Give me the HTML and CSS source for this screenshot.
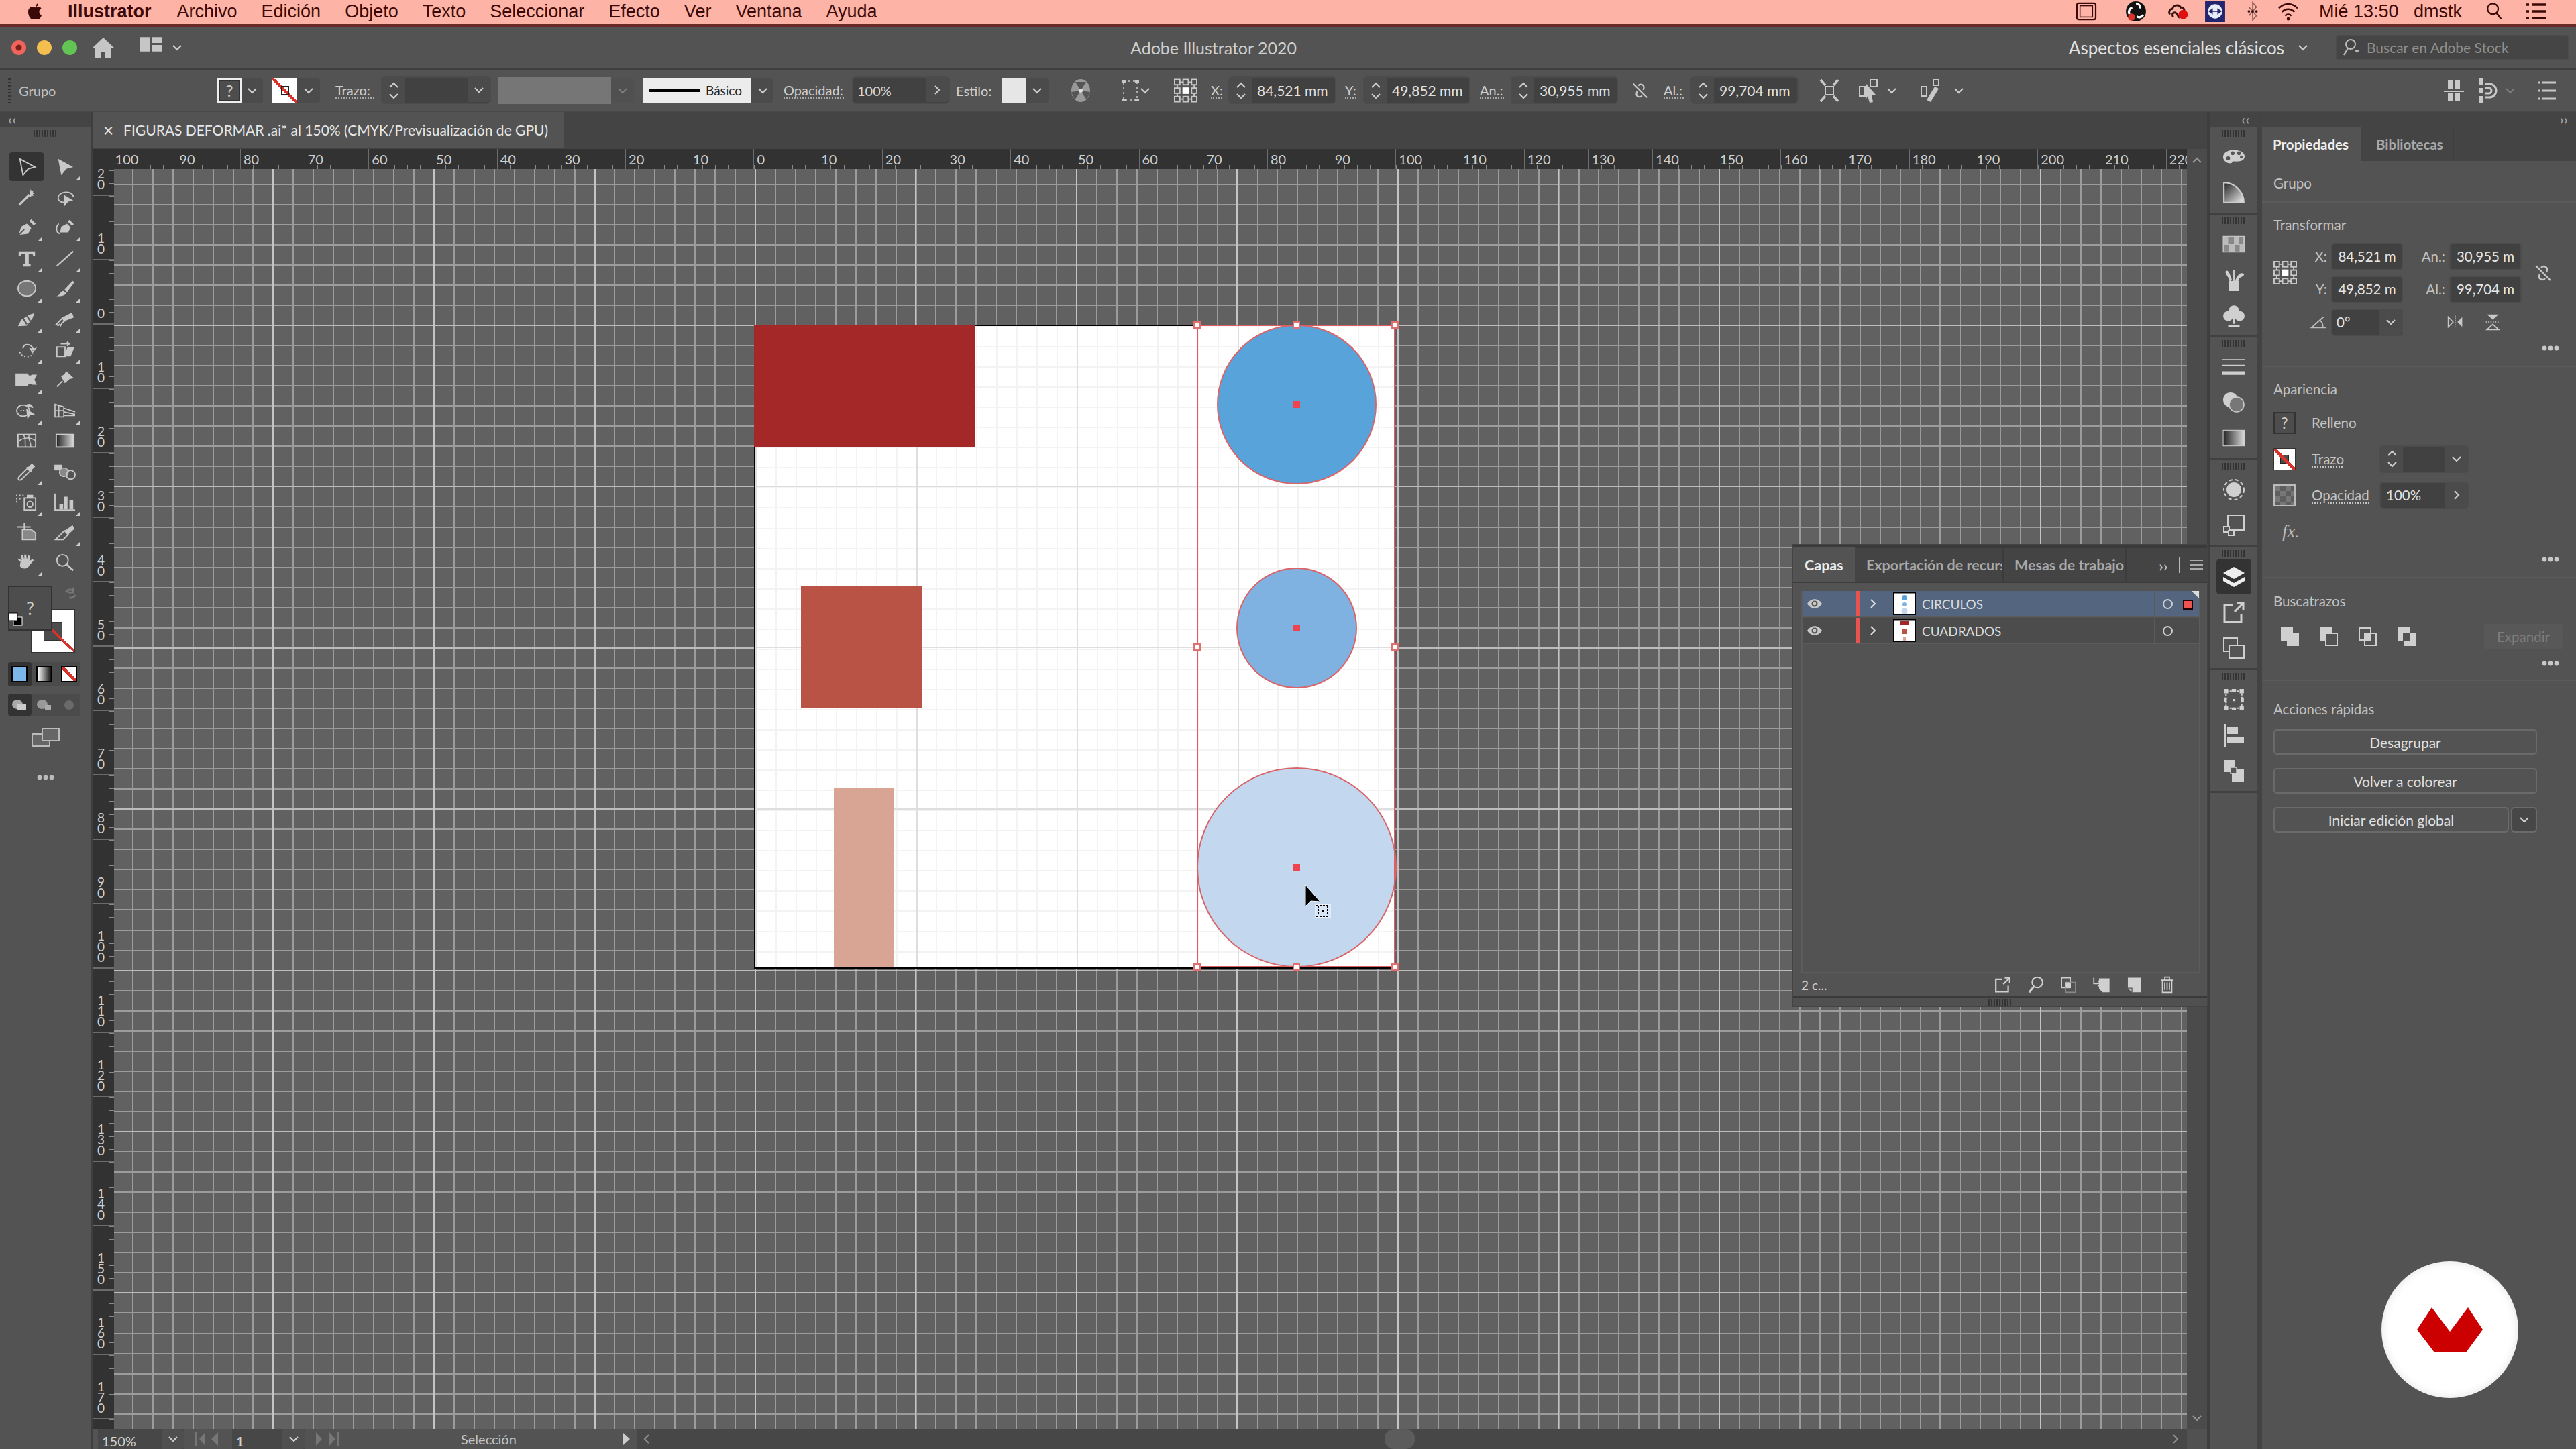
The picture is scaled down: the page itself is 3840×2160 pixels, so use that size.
FILE: index.html
```html
<!DOCTYPE html>
<html lang="es">
<head>
  <meta charset="UTF-8">
  <title>Adobe Illustrator 2020</title>
  <link rel="stylesheet" href="styles.css">
</head>
<body>
<svg class="defs" width="0" height="0">
  <symbol id="chev" viewBox="0 0 16 10"><polyline points="2,2 8,8 14,2" fill="none" stroke="currentColor" stroke-width="2"/></symbol>
  <symbol id="chev-up" viewBox="0 0 16 10"><polyline points="2,8 8,2 14,8" fill="none" stroke="currentColor" stroke-width="2"/></symbol>
  <symbol id="chev-r" viewBox="0 0 10 16"><polyline points="2,2 8,8 2,14" fill="none" stroke="currentColor" stroke-width="2"/></symbol>
  <symbol id="dots" viewBox="0 0 26 8"><circle cx="4" cy="4" r="3.4" fill="currentColor"/><circle cx="13" cy="4" r="3.4" fill="currentColor"/><circle cx="22" cy="4" r="3.4" fill="currentColor"/></symbol>
  <symbol id="anchor" viewBox="0 0 36 36"><g fill="none" stroke="currentColor" stroke-width="2"><rect x="1" y="1" width="8" height="8"/><rect x="14" y="1" width="8" height="8"/><rect x="27" y="1" width="8" height="8"/><rect x="1" y="14" width="8" height="8"/><rect x="27" y="14" width="8" height="8"/><rect x="1" y="27" width="8" height="8"/><rect x="14" y="27" width="8" height="8"/><rect x="27" y="27" width="8" height="8"/><path d="M9 5h5M22 5h5M9 31h5M22 31h5M5 9v5M5 22v5M31 9v5M31 22v5"/></g><rect x="13" y="13" width="10" height="10" fill="#fff"/></symbol>
  <symbol id="link" viewBox="0 0 28 28"><g fill="none" stroke="currentColor" stroke-width="2.4"><path d="M11 6a5 5 0 0 1 9 3l-1 4M17 22a5 5 0 0 1-9-3l1-4"/><path d="M3 3l22 22"/></g></symbol>
  <symbol id="eye" viewBox="0 0 24 16"><path d="M1 8c5-9 17-9 22 0-5 9-17 9-22 0z" fill="currentColor"/><circle cx="12" cy="8" r="4.5" fill="#555"/><circle cx="12" cy="8" r="2.4" fill="currentColor"/></symbol>
  <symbol id="export" viewBox="0 0 34 34"><path d="M15 6H3v25h25V19" fill="none" stroke="currentColor" stroke-width="3"/><path d="M18 16L30 4M21 3h10v10" fill="none" stroke="currentColor" stroke-width="3"/></symbol>
</svg>

<div class="screen">
  <!-- menu bar -->
  <header class="menubar">
    <svg class="apple" viewBox="0 0 24 28"><path d="M17 2c-2 .4-4 2.4-3.800 5 2.200.1 4-2.400 3.800-5zM12.400 8.300C10.800 8.300 9.500 7.300 7.800 7.300 4.600 7.400 2 10.300 2 15c0 5 3.500 11 6.300 11 1.600 0 2.300-1.100 4.200-1.100s2.400 1.100 4.100 1.100c2.500 0 4.800-4.100 5.400-6.300-4.500-2-4.700-8.100-.4-10.200-1.400-2-3.500-2.500-4.800-2.500-1.900 0-3.200 1.300-4.400 1.300z" fill="currentColor"/></svg>
    <span class="menu-app">Illustrator</span>
    <span class="menu-item">Archivo</span>
    <span class="menu-item">Edición</span>
    <span class="menu-item">Objeto</span>
    <span class="menu-item">Texto</span>
    <span class="menu-item">Seleccionar</span>
    <span class="menu-item">Efecto</span>
    <span class="menu-item">Ver</span>
    <span class="menu-item">Ventana</span>
    <span class="menu-item">Ayuda</span>
    <div class="menu-status">
      <svg class="st st-a" viewBox="0 0 34 30"><rect x="2" y="2" width="30" height="26" rx="3" fill="none" stroke="currentColor" stroke-width="2.4"/><rect x="7" y="6" width="20" height="18" fill="none" stroke="currentColor" stroke-width="1.6"/></svg>
      <svg class="st st-b" viewBox="0 0 30 30"><circle cx="15" cy="15" r="14" fill="#111"/><path d="M15 4a6 6 0 0 1 6 7M25 20a6 6 0 0 1-9 2M6 19a6 6 0 0 1 4-9" fill="none" stroke="#fff" stroke-width="3"/><circle cx="9" cy="23" r="5" fill="#d9322c"/></svg>
      <svg class="st st-c" viewBox="0 0 34 30"><path d="M5 20c-3-4 0-9 4-9 1-6 10-8 13-2 4-1 7 3 5 7" fill="none" stroke="#311" stroke-width="3"/><path d="M10 24c-3-5 1-9 5-6 3 2 2 6 5 7" fill="none" stroke="#311" stroke-width="3"/><circle cx="26" cy="20" r="7.5" fill="#e01010"/></svg>
      <svg class="st st-d" viewBox="0 0 28 30"><rect width="28" height="30" fill="#23256e"/><circle cx="14" cy="15" r="10" fill="#e7ecf8"/><path d="M6 15h16M6 15l4-3v6zM22 15l-4-3v6z" fill="#23256e" stroke="#23256e" stroke-width="1.5"/></svg>
      <svg class="st st-e" viewBox="0 0 20 32"><path d="M4 9l12 14-6 7V2l6 7L4 23" fill="none" stroke="#8a5a55" stroke-width="1.6"/><circle cx="4" cy="16" r="2" fill="#311"/><circle cx="16" cy="16" r="2" fill="#311"/><circle cx="10" cy="16" r="2" fill="#311"/></svg>
      <svg class="st st-f" viewBox="0 0 34 30"><path d="M2 10c9-9 21-9 30 0M7 16c6-6 14-6 20 0M12 22c3-3 7-3 10 0" fill="none" stroke="currentColor" stroke-width="2.6"/><circle cx="17" cy="27" r="2.5" fill="currentColor"/></svg>
      <span class="st-clock">Mié 13:50</span>
      <span class="st-user">dmstk</span>
      <svg class="st st-g" viewBox="0 0 28 30"><circle cx="12" cy="11" r="8.5" fill="none" stroke="currentColor" stroke-width="2.4"/><path d="M18 18l7 9" stroke="currentColor" stroke-width="2.8"/></svg>
      <svg class="st st-h" viewBox="0 0 34 28"><path d="M10 4h22M10 14h22M10 24h22" stroke="currentColor" stroke-width="3.4"/><path d="M2 4h4M2 14h4M2 24h4" stroke="currentColor" stroke-width="3.4"/></svg>
    </div>
  </header>

  <!-- title bar -->
  <div class="titlebar">
    <div class="title-left">
      <i class="light light-red"></i><i class="light light-yellow"></i><i class="light light-green"></i>
      <svg class="home" viewBox="0 0 34 30"><path d="M17 0L0 16h5v14h9v-9h6v9h9V16h5z" fill="currentColor"/></svg>
      <svg class="layout" viewBox="0 0 34 22"><path d="M0 0h15v22H0zM18 0h16v9H18zM18 12h16v10H18z" fill="currentColor"/></svg>
      <svg class="chev-s ml-14"><use href="#chev"/></svg>
    </div>
    <span class="title-name">Adobe Illustrator 2020</span>
    <span class="title-ws">Aspectos esenciales clásicos</span>
    <svg class="chev-s ml-20"><use href="#chev"/></svg>
    <div class="searchbox">
      <svg viewBox="0 0 30 30"><circle cx="15" cy="10" r="7" fill="none" stroke="currentColor" stroke-width="2"/><path d="M11 16l-6 10" stroke="currentColor" stroke-width="2.4"/><path d="M21 19h7l-3.5 4z" fill="currentColor"/></svg>
      <span>Buscar en Adobe Stock</span>
    </div>
  </div>

  <!-- control bar -->
  <div class="controlbar">
    <i class="ctl-grip"></i>
    <span class="ctl-group">Grupo</span>
    <div class="swatch-fill">?</div>
    <span class="dd w-32"><svg class="chev-s"><use href="#chev"/></svg></span>
    <div class="swatch-stroke ml-14"><i></i></div>
    <span class="dd w-34"><svg class="chev-s"><use href="#chev"/></svg></span>
    <span class="ctl-label ml-23 w-58">Trazo:</span>
    <div class="stepper ml-12 w-160">
      <span class="updown"><svg class="chev-s"><use href="#chev-up"/></svg><svg class="chev-s"><use href="#chev"/></svg></span>
      <span class="stepper-val"></span>
      <span class="dd w-33"><svg class="chev-s"><use href="#chev"/></svg></span>
    </div>
    <div class="ctl-disabled ml-13"></div>
    <span class="dd w-34 is-dim"><svg class="chev-s"><use href="#chev"/></svg></span>
    <div class="ctl-profile ml-13"><i></i><span>Básico</span></div>
    <span class="dd w-33"><svg class="chev-s"><use href="#chev"/></svg></span>
    <span class="ctl-label ml-15 w-90">Opacidad:</span>
    <div class="stepper ml-14 w-142">
      <span class="stepper-val stepper-val-pad">100%</span>
      <span class="dd w-34"><svg class="chev-v"><use href="#chev-r"/></svg></span>
    </div>
    <span class="ctl-text ml-11 w-55">Estilo:</span>
    <div class="swatch-style ml-13"></div>
    <span class="dd w-34"><svg class="chev-s"><use href="#chev"/></svg></span>
    <svg class="ctl-icon ml-33 globe" viewBox="0 0 30 36"><ellipse cx="15" cy="18" rx="14" ry="17" fill="#999"/><path d="M15 18L7 5h16zM15 18L1 20l5 12zM15 18l14 2-5 12z" fill="#555"/><circle cx="15" cy="18" r="3" fill="#ddd"/></svg>
    <svg class="ctl-icon ml-46 w-26" viewBox="0 0 26 36"><rect x="3" y="4" width="20" height="28" fill="none" stroke="currentColor" stroke-width="1.5" stroke-dasharray="3 4"/><path d="M0 2h6v4H0zM20 2h6v4h-6zM0 30h6v4H0zM20 30h6v4h-6z" fill="currentColor"/></svg>
    <svg class="chev-s ml-1"><use href="#chev"/></svg>
    <svg class="ctl-anchor ml-35"><use href="#anchor"/></svg>
    <span class="ctl-label ml-20 w-17">X:</span>
    <div class="stepper ml-11 w-157"><span class="updown"><svg class="chev-s"><use href="#chev-up"/></svg><svg class="chev-s"><use href="#chev"/></svg></span><span class="stepper-val stepper-val-txt">84,521 mm</span></div>
    <span class="ctl-label ml-15 w-17">Y:</span>
    <div class="stepper ml-12 w-156"><span class="updown"><svg class="chev-s"><use href="#chev-up"/></svg><svg class="chev-s"><use href="#chev"/></svg></span><span class="stepper-val stepper-val-txt">49,852 mm</span></div>
    <span class="ctl-label ml-16 w-36">An.:</span>
    <div class="stepper ml-12 w-156"><span class="updown"><svg class="chev-s"><use href="#chev-up"/></svg><svg class="chev-s"><use href="#chev"/></svg></span><span class="stepper-val stepper-val-txt">30,955 mm</span></div>
    <svg class="ctl-icon ml-22 w-26"><use href="#link"/></svg>
    <span class="ctl-label ml-22 w-30">Al.:</span>
    <div class="stepper ml-12 w-157"><span class="updown"><svg class="chev-s"><use href="#chev-up"/></svg><svg class="chev-s"><use href="#chev"/></svg></span><span class="stepper-val stepper-val-txt">99,704 mm</span></div>
    <svg class="ctl-icon ml-33 w-30" viewBox="0 0 30 36"><rect x="9" y="12" width="12" height="12" fill="none" stroke="currentColor" stroke-width="2"/><path d="M2 2l7 8M28 2l-7 8M2 34l7-8M28 34l-7-8" stroke="currentColor" stroke-width="3.5"/></svg>
    <svg class="ctl-icon ml-28 w-30" viewBox="0 0 30 36"><rect x="18" y="2" width="10" height="10" fill="none" stroke="currentColor" stroke-width="2"/><rect x="2" y="12" width="8" height="14" fill="none" stroke="currentColor" stroke-width="2"/><path d="M12 8l14 16-6 1 2 10-5 1-3-10-2 4z" fill="currentColor"/></svg>
    <svg class="chev-s ml-12"><use href="#chev"/></svg>
    <svg class="ctl-icon ml-34 w-30" viewBox="0 0 30 36"><rect x="20" y="2" width="8" height="8" fill="none" stroke="currentColor" stroke-width="2"/><rect x="2" y="12" width="8" height="14" fill="none" stroke="currentColor" stroke-width="2"/><path d="M22 12l6 3-12 20-6-3z" fill="currentColor"/></svg>
    <svg class="chev-s ml-20"><use href="#chev"/></svg>
    <svg class="ctl-icon ml-auto w-30" viewBox="0 0 30 36"><path d="M6 2h7v14H6zM17 2h7v14h-7zM6 22h7v12H6zM17 22h7v12h-7z" fill="currentColor"/><path d="M0 19h30" stroke="currentColor" stroke-width="2"/></svg>
    <svg class="ctl-icon ml-20 w-30" viewBox="0 0 30 36"><path d="M2 0h6v10H2zM2 14h6v8H2zM2 26h6v10H2z" fill="currentColor"/><path d="M12 8h6a10 10 0 0 1 0 20h-6M12 14h5a4 4 0 0 1 0 8h-5" fill="none" stroke="currentColor" stroke-width="3"/></svg>
    <svg class="chev-s ml-11 is-dim"><use href="#chev"/></svg>
    <svg class="ctl-icon ml-32 w-30 mr-28" viewBox="0 0 30 36"><path d="M8 6h20M8 18h20M8 30h20M2 6h2M2 18h2M2 30h2" stroke="currentColor" stroke-width="3"/></svg>
  </div>

  <div class="workspace">
    <!-- left tools -->
    <aside class="tools">
      <div class="strip"><span class="strip-chev">‹‹</span></div>
      <i class="grip"></i>
      <div class="tool-grid">
        <div class="tool is-on"><svg viewBox="0 0 32 32"><path d="M5 3l24 13-11 3-8 10z" fill="none" stroke="currentColor" stroke-width="2"/></svg></div>
        <div class="tool has-more"><svg viewBox="0 0 32 32"><path d="M5 3l24 13-11 3-8 10z" fill="currentColor"/></svg></div>
        <div class="tool"><svg viewBox="0 0 32 32"><path d="M4 28L20 12" stroke="currentColor" stroke-width="3.5"/><path d="M22 3l1.500 3 3-1-1 3 3 1.500-3 1.500 1 3-3-1-1.500 3-1.500-3" fill="currentColor"/></svg></div>
        <div class="tool"><svg viewBox="0 0 32 32"><path d="M14 24C3 24 2 12 12 9c9-3 17 1 17 6" fill="none" stroke="currentColor" stroke-width="2"/><path d="M14 12l15 9-8 2-6 7z" fill="currentColor"/></svg></div>
        <div class="tool has-more"><svg viewBox="0 0 32 32"><path d="M3 28l4-13 9-5 7 7-5 9zM20 6l3-3 7 7-3 3z" fill="currentColor"/><path d="M3 28l9-9" stroke="#555" stroke-width="2"/></svg></div>
        <div class="tool has-more"><svg viewBox="0 0 32 32"><path d="M8 24l2-9 9-5 6 6-4 8zM20 7l3-3 7 7-3 2z" fill="currentColor"/><path d="M8 26C0 24 2 14 6 10" fill="none" stroke="currentColor" stroke-width="2"/></svg></div>
        <div class="tool has-more"><svg viewBox="0 0 32 32"><path d="M3 5h26v7h-3l-1-3h-6v16h3v4H10v-4h3V9H7l-1 3H3z" fill="currentColor"/></svg></div>
        <div class="tool has-more"><svg viewBox="0 0 32 32"><path d="M3 28L29 5" stroke="currentColor" stroke-width="2.4"/></svg></div>
        <div class="tool has-more"><svg viewBox="0 0 32 32"><ellipse cx="16" cy="16" rx="14" ry="12" fill="#777" stroke="currentColor" stroke-width="2"/></svg></div>
        <div class="tool has-more"><svg viewBox="0 0 32 32"><path d="M2 28c6 0 6-8 12-8l4 4c-3 4-9 5-16 4zM15 18L28 4l3 2-12 16z" fill="currentColor"/></svg></div>
        <div class="tool has-more"><svg viewBox="0 0 32 32"><path d="M2 27l5-10 12-8 9-3-3 8-9 12z" fill="currentColor"/><path d="M10 14l6 10M16 10l6 10" stroke="#555" stroke-width="2.5"/></svg></div>
        <div class="tool has-more"><svg viewBox="0 0 32 32"><path d="M2 24l10-10 3 5-4 3-2 4-2-2-2 2z" fill="none" stroke="currentColor" stroke-width="2"/><path d="M12 13L27 5l3 8-15 6z" fill="currentColor"/></svg></div>
        <div class="tool has-more"><svg viewBox="0 0 32 32"><path d="M10 14C10 6 24 6 26 16l-4-1 3 5 4-5-3 1" fill="none" stroke="currentColor" stroke-width="2.2"/><path d="M5 20c2 9 18 10 21 2" fill="none" stroke="currentColor" stroke-width="2" stroke-dasharray="2 3"/></svg></div>
        <div class="tool has-more"><svg viewBox="0 0 32 32"><rect x="3" y="12" width="13" height="15" fill="none" stroke="currentColor" stroke-width="2"/><path d="M14 27l6-15h11l-6 15z" fill="currentColor"/><path d="M9 7h14M19 4l4 3-4 3" fill="none" stroke="currentColor" stroke-width="2"/></svg></div>
        <div class="tool has-more"><svg viewBox="0 0 36 32"><path d="M0 6h20c0 4 4 4 6 2h8l-4 8 4 8h-8c-3-2-6-2-6 2H0z" fill="currentColor"/></svg></div>
        <div class="tool"><svg viewBox="0 0 32 32"><path d="M18 4l10 9-5 1-7 6-5-9 5-3zM12 18l-9 9" fill="currentColor" stroke="currentColor" stroke-width="2"/></svg></div>
        <div class="tool has-more"><svg viewBox="0 0 36 32"><ellipse cx="12" cy="16" rx="10" ry="9" fill="none" stroke="currentColor" stroke-width="2"/><path d="M8 16h8" stroke="currentColor" stroke-width="2" stroke-dasharray="2 2"/><path d="M16 8c6-6 12 0 12 4M17 13l14 9-8 1-4 7z" fill="currentColor"/></svg></div>
        <div class="tool has-more"><svg viewBox="0 0 36 32"><path d="M2 6l14 4v16H2zM2 16h14M8 8v18M16 12l18 6M16 18l18 4M16 24h18" fill="none" stroke="currentColor" stroke-width="1.8"/></svg></div>
        <div class="tool"><svg viewBox="0 0 32 32"><rect x="2" y="6" width="28" height="20" fill="none" stroke="currentColor" stroke-width="2"/><path d="M2 18c8-8 20-8 28-2M10 6c6 6 2 14 4 20M20 6c-4 6 4 14 2 20" fill="none" stroke="currentColor" stroke-width="1.6"/></svg></div>
        <div class="tool"><svg viewBox="0 0 32 32"><defs><linearGradient id="g1"><stop offset="0" stop-color="#222"/><stop offset="1" stop-color="#ddd"/></linearGradient></defs><rect x="2" y="6" width="28" height="20" fill="url(#g1)" stroke="#ccc" stroke-width="2"/></svg></div>
        <div class="tool has-more"><svg viewBox="0 0 32 32"><path d="M3 29c-1-2 0-4 1-5l13-13 4 4L8 28c-1 1-3 2-5 1z" fill="none" stroke="currentColor" stroke-width="2"/><path d="M15 9l4-1 5-5 5 5-5 5-1 4z" fill="currentColor"/></svg></div>
        <div class="tool"><svg viewBox="0 0 36 32"><path d="M1 5h12v9H1z" fill="currentColor"/><circle cx="16" cy="17" r="7" fill="#888" stroke="currentColor" stroke-width="1.5"/><circle cx="27" cy="21" r="7" fill="none" stroke="currentColor" stroke-width="2"/></svg></div>
        <div class="tool has-more"><svg viewBox="0 0 36 32"><rect x="14" y="10" width="18" height="19" fill="none" stroke="currentColor" stroke-width="2"/><circle cx="23" cy="20" r="4.5" fill="none" stroke="currentColor" stroke-width="2"/><path d="M18 5h10v5H18z" fill="currentColor"/><path d="M1 6h2M6 6h2M11 6h2M1 11h2M6 11h2M1 16h2" stroke="currentColor" stroke-width="2.5"/></svg></div>
        <div class="tool has-more"><svg viewBox="0 0 36 32"><path d="M2 3v26h32" fill="none" stroke="currentColor" stroke-width="2"/><path d="M9 20h6v8H9zM16 8h6v20h-6zM25 13h6v15h-6z" fill="currentColor"/></svg></div>
        <div class="tool"><svg viewBox="0 0 36 32"><path d="M14 2v12M2 8h22" stroke="currentColor" stroke-width="2"/><path d="M11 12h14l7 6v10H11z" fill="#888" stroke="currentColor" stroke-width="2"/></svg></div>
        <div class="tool has-more"><svg viewBox="0 0 36 32"><path d="M3 28l14-14 6 6-8 8z" fill="none" stroke="currentColor" stroke-width="2"/><path d="M17 14L30 5l3 6-10 9z" fill="currentColor"/></svg></div>
        <div class="tool has-more"><svg viewBox="0 0 32 32"><path d="M6 14l-4-3 1-2 5 3-1-8h3l2 7V3h3l1 8 2-7 3 1-1 8 5-3 2 2-7 8c-2 6-12 7-15 1z" fill="currentColor"/></svg></div>
        <div class="tool"><svg viewBox="0 0 32 32"><circle cx="12" cy="12" r="9" fill="none" stroke="currentColor" stroke-width="2"/><path d="M19 19l10 9" stroke="currentColor" stroke-width="3"/></svg></div>
      </div>
      <div class="colorbox">
        <div class="colorbox-stroke"><i></i></div>
        <div class="colorbox-fill">?</div>
        <svg class="colorbox-default" viewBox="0 0 22 20"><rect x="8" y="7" width="13" height="12" fill="#000" stroke="#fff"/><rect x="1" y="1" width="13" height="11" fill="#fff" stroke="#000"/></svg>
        <svg class="colorbox-swap" viewBox="0 0 24 24"><path d="M4 10c4-6 10-6 14-2M16 2v8h-8M20 14c-2 4-6 6-10 4" fill="none" stroke="#777" stroke-width="3"/></svg>
      </div>
      <div class="mode-row mode-color">
        <span class="mode-btn is-on"><i class="mode-blue"></i></span>
        <span class="mode-btn"><i class="mode-grad"></i></span>
        <span class="mode-btn"><i class="mode-none"></i></span>
      </div>
      <div class="mode-row mode-draw">
        <span class="mode-btn is-on"><svg viewBox="0 0 24 18"><ellipse cx="9" cy="8" rx="8" ry="7" fill="#aaa"/><rect x="9" y="8" width="13" height="9" fill="#ccc"/></svg></span>
        <span class="mode-btn"><svg viewBox="0 0 24 18"><ellipse cx="9" cy="8" rx="8" ry="7" fill="#999"/><rect x="13" y="9" width="9" height="8" fill="#aaa"/></svg></span>
        <span class="mode-btn"><svg viewBox="0 0 24 18"><ellipse cx="12" cy="9" rx="7" ry="7" fill="#6a6a6a"/></svg></span>
      </div>
      <svg class="screenmode" viewBox="0 0 42 28"><rect x="1" y="9" width="26" height="18" fill="#666" stroke="#bbb" stroke-width="2"/><rect x="16" y="1" width="25" height="18" fill="#666" stroke="#bbb" stroke-width="2"/></svg>
      <svg class="tools-more"><use href="#dots"/></svg>
    </aside>
    <i class="tools-line"></i>

    <!-- document -->
    <main class="doc">
      <div class="tabrow">
        <div class="tab"><span class="tab-x">×</span><span>FIGURAS DEFORMAR .ai* al 150% (CMYK/Previsualización de GPU)</span></div>
      </div>
      <div class="rulerrow">
        <div class="ruler-corner"></div>
        <div class="hruler">
          <span>100</span><span>90</span><span>80</span><span>70</span><span>60</span><span>50</span><span>40</span><span>30</span><span>20</span><span>10</span><span>0</span><span>10</span><span>20</span><span>30</span><span>40</span><span>50</span><span>60</span><span>70</span><span>80</span><span>90</span><span>100</span><span>110</span><span>120</span><span>130</span><span>140</span><span>150</span><span>160</span><span>170</span><span>180</span><span>190</span><span>200</span><span>210</span><span>220</span>
        </div>
      </div>
      <div class="canvasrow">
        <div class="vruler">
          <div class="vtick vtick-first"><b>20</b></div>
          <div class="vtick"><b>10</b></div><div class="vtick"><b>0</b></div><div class="vtick"><b>10</b></div><div class="vtick"><b>20</b></div><div class="vtick"><b>30</b></div><div class="vtick"><b>40</b></div><div class="vtick"><b>50</b></div><div class="vtick"><b>60</b></div><div class="vtick"><b>70</b></div><div class="vtick"><b>80</b></div><div class="vtick"><b>90</b></div><div class="vtick"><b>100</b></div><div class="vtick"><b>110</b></div><div class="vtick"><b>120</b></div><div class="vtick"><b>130</b></div><div class="vtick"><b>140</b></div><div class="vtick"><b>150</b></div><div class="vtick"><b>160</b></div><div class="vtick"><b>170</b></div>
        </div>
        <div class="canvas">
          <div class="artboard">
            <div class="shape rect-big"></div>
            <div class="shape rect-mid"></div>
            <div class="shape rect-small"></div>
            <div class="circle circle-a"></div>
            <div class="circle circle-b"></div>
            <div class="circle circle-c"></div>
          </div>
          <div class="bbox">
            <i class="handle h-tl"></i><i class="handle h-tc"></i><i class="handle h-tr"></i>
            <i class="handle h-ml"></i><i class="handle h-mr"></i>
            <i class="handle h-bl"></i><i class="handle h-bc"></i><i class="handle h-br"></i>
          </div>
          <svg class="cursor" viewBox="0 0 40 52"><path d="M2 1v32l8-8 14 1z" fill="#000" stroke="#fff" stroke-width="1"/><rect x="17" y="30" width="22" height="20" fill="#d9e6f5" stroke="#fff"/><path d="M18 32h20M18 48h20M21 32v16M35 32v16" stroke="#000" stroke-width="2" stroke-dasharray="3 2"/><rect x="26" y="38" width="4" height="4" fill="#000"/></svg>
        </div>
      </div>
      <div class="statusbar">
        <div class="status-field w-128"><span class="status-val">150%</span><span class="dd w-32"><svg class="chev-s"><use href="#chev"/></svg></span></div>
        <svg class="status-nav ml-17" viewBox="0 0 40 26"><path d="M0 3h3v20H0zM15 3L6 13l9 10zM34 3L24 13l10 10z" fill="#767676"/></svg>
        <div class="status-field w-108 ml-15"><span class="status-val">1</span><span class="dd w-33"><svg class="chev-s"><use href="#chev"/></svg></span></div>
        <svg class="status-nav ml-15" viewBox="0 0 40 26"><path d="M2 3l9 10-9 10zM22 3l9 10-9 10zM33 3h3v20h-3z" fill="#767676"/></svg>
        <span class="status-tool">Selección</span>
        <svg class="status-play" viewBox="0 0 12 20"><path d="M1 1l10 9-10 9z" fill="currentColor"/></svg>
        <div class="hscroll">
          <svg class="hscroll-chev"><use href="#chev-r"/></svg>
          <i class="hscroll-thumb"></i>
          <svg class="hscroll-chev"><use href="#chev-r"/></svg>
        </div>
      </div>
    </main>

    <div class="vscroll">
      <div class="vscroll-top"></div>
      <svg class="chev-s vscroll-up"><use href="#chev-up"/></svg>
      <svg class="chev-s vscroll-down"><use href="#chev"/></svg>
      <div class="vscroll-end"></div>
    </div>

    <!-- icon dock -->
    <div class="dock">
      <div class="strip"><span class="strip-chev strip-right">‹‹</span></div>
      <div class="dock-group">
        <i class="grip"></i>
        <div class="dock-cell"><svg viewBox="0 0 36 30"><path d="M18 4C8 4 1 9 1 15s6 10 11 10c4 0 3-3 6-3 5 0 17 1 17-8 0-6-8-10-17-10z" fill="currentColor"/><circle cx="9" cy="17" r="3" fill="#555"/><circle cx="16" cy="9" r="3" fill="#555"/><circle cx="26" cy="9" r="3" fill="#555"/><circle cx="30" cy="15" r="2.5" fill="#555"/></svg></div>
        <div class="dock-cell"><svg viewBox="0 0 32 32"><defs><linearGradient id="g2" x1="0" y1="0" x2="1" y2="1"><stop offset="0" stop-color="#222"/><stop offset="1" stop-color="#eee"/></linearGradient></defs><path d="M2 2c14 0 28 12 28 28H2z" fill="url(#g2)" stroke="#ccc" stroke-width="2"/></svg></div>
      </div>
      <div class="dock-group">
        <i class="grip"></i>
        <div class="dock-cell"><svg viewBox="0 0 32 24"><rect x="1" y="1" width="30" height="22" fill="#bbb" stroke="#ccc"/><path d="M8 2h8v9H8zM23 2h6v9h-6zM2 13h7v9H2zM17 13h7v9h-7z" fill="#888"/></svg></div>
        <div class="dock-cell"><svg viewBox="0 0 32 36"><path d="M8 20h16v16H8z" fill="currentColor"/><path d="M10 20c0-6-8-12-6-15 3-2 6 8 8 14M16 20V3M22 20c0-8 8-6 9-10-3-4-10 2-12 10" fill="currentColor" stroke="currentColor" stroke-width="2"/></svg></div>
        <div class="dock-cell"><svg viewBox="0 0 32 32"><circle cx="16" cy="9" r="7" fill="currentColor"/><circle cx="8" cy="17" r="7" fill="currentColor"/><circle cx="24" cy="17" r="7" fill="currentColor"/><path d="M15 15h2v13h-2zM8 30h16v2H8z" fill="currentColor"/></svg></div>
      </div>
      <div class="dock-group">
        <i class="grip"></i>
        <div class="dock-cell"><svg viewBox="0 0 32 24"><path d="M0 1h32v1H0zM0 9h32v2H0zM0 18h32v5H0z" fill="currentColor"/></svg></div>
        <div class="dock-cell"><svg viewBox="0 0 34 32"><circle cx="12" cy="12" r="11" fill="currentColor"/><circle cx="21" cy="19" r="11" fill="#777" stroke="#ccc" stroke-width="1.5"/></svg></div>
        <div class="dock-cell"><svg viewBox="0 0 32 24"><rect x="1" y="1" width="30" height="22" fill="url(#g1)" stroke="#ccc"/></svg></div>
      </div>
      <div class="dock-group">
        <i class="grip"></i>
        <div class="dock-cell"><svg viewBox="0 0 34 34"><ellipse cx="17" cy="17" rx="11" ry="11" fill="currentColor"/><ellipse cx="17" cy="17" rx="15" ry="15" fill="none" stroke="currentColor" stroke-width="2" stroke-dasharray="5 4"/></svg></div>
        <div class="dock-cell"><svg viewBox="0 0 34 34"><rect x="8" y="2" width="24" height="22" fill="none" stroke="currentColor" stroke-width="2"/><rect x="2" y="19" width="8" height="8" fill="#555" stroke="currentColor" stroke-width="2"/><rect x="9" y="25" width="8" height="7" fill="#555" stroke="currentColor" stroke-width="2"/></svg></div>
      </div>
      <div class="dock-group">
        <i class="grip"></i>
        <div class="dock-cell is-on"><svg viewBox="0 0 34 32"><path d="M17 1l16 9-16 9-16-9z" fill="#eee"/><path d="M1 16l16 9 16-9v6l-16 9-16-9z" fill="#eee"/></svg></div>
        <div class="dock-cell"><svg viewBox="0 0 34 34"><use href="#export"/></svg></div>
        <div class="dock-cell"><svg viewBox="0 0 34 34"><rect x="2" y="2" width="20" height="20" fill="none" stroke="currentColor" stroke-width="2"/><rect x="10" y="13" width="22" height="19" fill="#555" stroke="currentColor" stroke-width="2"/></svg></div>
      </div>
      <div class="dock-group">
        <i class="grip"></i>
        <div class="dock-cell"><svg viewBox="0 0 30 32"><rect x="4" y="4" width="22" height="24" fill="none" stroke="currentColor" stroke-width="2" stroke-dasharray="3 2"/><path d="M1 1h6v6H1zM12 1h6v4h-6zM23 1h6v6h-6zM1 13h4v6H1zM25 13h4v6h-4zM1 25h6v6H1zM12 27h6v4h-6zM23 25h6v6h-6zM14 15h3v3h-3z" fill="currentColor"/></svg></div>
        <div class="dock-cell"><svg viewBox="0 0 30 34"><path d="M1 0h2v34H1zM5 5h16v10H5zM5 19h25v10H5z" fill="currentColor"/></svg></div>
        <div class="dock-cell"><svg viewBox="0 0 30 34"><path d="M1 1h16v14h-4v4H1zM12 14h18v19H12z" fill="currentColor"/><rect x="10" y="12" width="9" height="9" fill="#555" stroke="#ccc" stroke-width="1.5"/></svg></div>
      </div>
    </div>

    <!-- properties -->
    <section class="props">
      <div class="strip"><span class="strip-chev strip-end">››</span></div>
      <div class="props-tabs">
        <span class="props-tab is-on">Propiedades</span>
        <span class="props-tab">Bibliotecas</span>
      </div>
      <div class="prop-sec sec-group"><span class="sec-title">Grupo</span></div>
      <div class="prop-sec sec-transform">
        <h3 class="sec-title">Transformar</h3>
        <div class="tf-grid">
          <svg class="tf-anchor"><use href="#anchor"/></svg>
          <span class="tf-label">X:</span><span class="tf-input">84,521 m</span>
          <span class="tf-label">An.:</span><span class="tf-input">30,955 m</span>
          <svg class="tf-link"><use href="#link"/></svg>
          <span class="tf-label">Y:</span><span class="tf-input">49,852 m</span>
          <span class="tf-label">Al.:</span><span class="tf-input">99,704 m</span>
          <svg class="tf-angle" viewBox="0 0 30 22"><path d="M26 20H3L22 3M17 9c3 2 4 6 4 10" fill="none" stroke="currentColor" stroke-width="2"/></svg>
          <span class="tf-select"><span>0°</span><span class="dd w-33"><svg class="chev-s"><use href="#chev"/></svg></span></span>
          <div class="tf-flips">
            <svg viewBox="0 0 30 26"><path d="M2 4v18l9-9z" fill="none" stroke="currentColor" stroke-width="2"/><path d="M15 1v24" stroke="currentColor" stroke-width="1.5" stroke-dasharray="2 2"/><path d="M28 4v18l-9-9z" fill="currentColor"/></svg>
            <svg viewBox="0 0 26 30"><path d="M3 2h20l-10 9z" fill="currentColor"/><path d="M1 15h24" stroke="currentColor" stroke-width="1.5" stroke-dasharray="2 2"/><path d="M3 28h20l-10-9z" fill="none" stroke="currentColor" stroke-width="2"/></svg>
          </div>
        </div>
        <div class="more-row"><svg class="more"><use href="#dots"/></svg></div>
      </div>
      <div class="prop-sec sec-appearance">
        <h3 class="sec-title">Apariencia</h3>
        <div class="ap-row"><span class="ap-fill">?</span><span class="ap-label">Relleno</span></div>
        <div class="ap-row"><span class="ap-stroke"><i></i></span><span class="ap-label is-link">Trazo</span>
          <div class="ap-ctl"><span class="updown updown-sm"><svg class="chev-s"><use href="#chev-up"/></svg><svg class="chev-s"><use href="#chev"/></svg></span><span class="stepper-val"></span><span class="dd w-33"><svg class="chev-s"><use href="#chev"/></svg></span></div>
        </div>
        <div class="ap-row"><span class="ap-opacity"></span><span class="ap-label is-link">Opacidad</span>
          <div class="ap-ctl"><span class="stepper-val ap-val">100%</span><span class="dd w-33"><svg class="chev-v"><use href="#chev-r"/></svg></span></div>
        </div>
        <div class="ap-row"><span class="ap-fx">fx<small>.</small></span></div>
        <div class="more-row more-row-ap"><svg class="more"><use href="#dots"/></svg></div>
      </div>
      <div class="prop-sec sec-pathfinder">
        <h3 class="sec-title">Buscatrazos</h3>
        <div class="pf-row">
          <svg viewBox="0 0 27 28"><path d="M0 0h18v8h9v20H9v-8H0z" fill="currentColor"/></svg>
          <svg viewBox="0 0 27 28"><path d="M0 0h18v8H9v12H0z" fill="currentColor"/><rect x="9" y="9" width="17" height="18" fill="none" stroke="currentColor" stroke-width="2"/></svg>
          <svg viewBox="0 0 27 28"><rect x="1" y="1" width="17" height="18" fill="none" stroke="currentColor" stroke-width="2"/><rect x="9" y="9" width="17" height="18" fill="none" stroke="currentColor" stroke-width="2"/><rect x="9" y="9" width="9" height="10" fill="currentColor"/></svg>
          <svg viewBox="0 0 27 28"><path d="M0 0h18v8H8v12H0zM18 8h9v20H9v-8h9z" fill="currentColor"/></svg>
          <span class="pf-expand">Expandir</span>
        </div>
        <div class="more-row more-row-pf"><svg class="more"><use href="#dots"/></svg></div>
      </div>
      <div class="prop-sec sec-actions">
        <h3 class="sec-title">Acciones rápidas</h3>
        <button class="act-btn">Desagrupar</button>
        <button class="act-btn">Volver a colorear</button>
        <div class="act-split">
          <button class="act-btn">Iniciar edición global</button>
          <span class="act-dd"><svg class="chev-s"><use href="#chev"/></svg></span>
        </div>
      </div>
    </section>
  </div>

  <!-- floating layers panel -->
  <section class="layers">
    <div class="layers-tabs">
      <span class="ly-tab is-on">Capas</span>
      <span class="ly-tab ly-tab-export">Exportación de recursos</span>
      <span class="ly-tab ly-tab-boards">Mesas de trabajo</span>
      <span class="ly-more">››</span>
      <i class="ly-bar"></i>
      <svg class="ly-menu" viewBox="0 0 20 14"><path d="M0 1h20M0 7h20M0 13h20" stroke="currentColor" stroke-width="1.5"/></svg>
    </div>
    <div class="ly-list">
      <div class="ly-row is-sel">
        <span class="ly-eye"><svg><use href="#eye"/></svg></span>
        <span class="ly-lock"></span>
        <i class="ly-color"></i>
        <svg class="ly-arrow"><use href="#chev-r"/></svg>
        <svg class="ly-thumb" viewBox="0 0 34 34"><rect width="34" height="34" fill="#fff" stroke="#000" stroke-width="3"/><circle cx="17" cy="8" r="4" fill="#57a3da"/><circle cx="17" cy="18" r="3" fill="#7fb2e0"/><circle cx="17" cy="28" r="4.5" fill="#c3d8ef"/></svg>
        <span class="ly-name">CIRCULOS</span>
        <span class="ly-target"><i></i></span>
        <i class="ly-selected"></i>
        <i class="ly-corner"></i>
      </div>
      <div class="ly-row">
        <span class="ly-eye"><svg><use href="#eye"/></svg></span>
        <span class="ly-lock"></span>
        <i class="ly-color"></i>
        <svg class="ly-arrow"><use href="#chev-r"/></svg>
        <svg class="ly-thumb" viewBox="0 0 34 34"><rect width="34" height="34" fill="#fff" stroke="#000" stroke-width="3"/><rect x="11" y="2" width="12" height="7" fill="#a52828"/><rect x="14" y="15" width="6" height="7" fill="#b85345"/><rect x="15" y="26" width="4" height="7" fill="#d8a595"/></svg>
        <span class="ly-name">CUADRADOS</span>
        <span class="ly-target"><i></i></span>
      </div>
    </div>
    <div class="ly-foot">
      <span class="ly-count">2 c...</span>
      <svg class="ly-ic ly-ic-first" viewBox="0 0 34 34"><use href="#export"/></svg>
      <svg class="ly-ic" viewBox="0 0 28 30"><circle cx="17" cy="11" r="9" fill="none" stroke="currentColor" stroke-width="2.4"/><path d="M11 18l-8 10" stroke="currentColor" stroke-width="3.5"/></svg>
      <svg class="ly-ic" viewBox="0 0 28 30"><rect x="2" y="3" width="15" height="17" fill="#555" stroke="currentColor" stroke-width="2"/><rect x="9" y="11" width="17" height="17" fill="none" stroke="#888" stroke-width="2"/><rect x="9" y="11" width="8" height="9" fill="currentColor"/></svg>
      <svg class="ly-ic" viewBox="0 0 28 30"><path d="M10 4h18v24H16l-6-6z" fill="currentColor"/><path d="M1 3v10h11M8 8l5 5-5 5" fill="none" stroke="currentColor" stroke-width="2"/></svg>
      <svg class="ly-ic" viewBox="0 0 28 30"><path d="M3 3h22v25H10l-7-7z" fill="currentColor"/><path d="M3 21h7v7" fill="none" stroke="#555" stroke-width="1.5"/></svg>
      <svg class="ly-ic" viewBox="0 0 28 30"><path d="M3 7h22M10 6V2h8v4M6 7v21h16V7M10 11v13M14 11v13M18 11v13" fill="none" stroke="currentColor" stroke-width="2"/></svg>
    </div>
    <div class="ly-resize"><i class="grip"></i></div>
  </section>

  <!-- watermark logo -->
  <div class="logo">
    <svg viewBox="0 0 98 67"><path d="M22 0l27 36L76 0l22 33-25 34H26L0 33z" fill="#cc0000"/></svg>
  </div>
</div>
</body>
</html>
```

FILE: styles.css
```css
/* General */
* { box-sizing: border-box; }

body {
  margin: 0;
  width: 3840px;
  height: 2160px;
  overflow: hidden;
  background: #535353;
  font-family: 'Lato', 'Liberation Sans', sans-serif;
  color: #d0d0d0;
}

i { display: block; font-style: normal; }
.defs { position: absolute; }

.screen {
  position: relative;
  width: 3840px;
  height: 2160px;
  display: flex;
  flex-direction: column;
}

/* Little spacing helpers for the crowded control bar */
.ml-1 { margin-left: 1px; }
.ml-11 { margin-left: 11px; }
.ml-12 { margin-left: 12px; }
.ml-13 { margin-left: 13px; }
.ml-14 { margin-left: 14px; }
.ml-15 { margin-left: 15px; }
.ml-16 { margin-left: 16px; }
.ml-17 { margin-left: 17px; }
.ml-20 { margin-left: 20px; }
.ml-22 { margin-left: 22px; }
.ml-23 { margin-left: 23px; }
.ml-28 { margin-left: 28px; }
.ml-32 { margin-left: 32px; }
.ml-33 { margin-left: 33px; }
.ml-34 { margin-left: 34px; }
.ml-35 { margin-left: 35px; }
.ml-46 { margin-left: 46px; }
.ml-auto { margin-left: auto; }
.mr-28 { margin-right: 28px; }
.w-17 { width: 17px; }
.w-26 { width: 26px; }
.w-30 { width: 30px; }
.w-32 { width: 32px; }
.w-33 { width: 33px; }
.w-34 { width: 34px; }
.w-36 { width: 36px; }
.w-55 { width: 55px; }
.w-58 { width: 58px; }
.w-90 { width: 90px; }
.w-108 { width: 108px; }
.w-128 { width: 128px; }
.w-142 { width: 142px; }
.w-156 { width: 156px; }
.w-157 { width: 157px; }
.w-160 { width: 160px; }

/* Menu bar */
.menubar {
  height: 40px;
  flex: none;
  display: flex;
  align-items: center;
  padding-bottom: 2px;
  background: #fdb3a6;
  border-bottom: 4px solid #6b2a27;
  color: #3b0907;
  font-family: 'Liberation Sans', sans-serif;
  font-size: 27px;
}

.apple { width: 24px; height: 28px; margin: 0 37px 0 40px; }
.menu-app { font-weight: 700; margin-right: 38px; }
.menu-item { margin-right: 36px; }
.menu-status { margin-left: auto; display: flex; align-items: center; height: 34px; }
.st { flex: none; height: 28px; }
.st-a { width: 32px; margin-right: 42px; }
.st-b { width: 32px; height: 32px; margin-right: 28px; }
.st-c { width: 36px; margin-right: 23px; }
.st-d { width: 30px; height: 32px; margin-right: 31px; }
.st-e { width: 20px; height: 30px; margin-right: 26px; }
.st-f { width: 34px; margin-right: 29px; }
.st-clock { width: 118px; margin-right: 23px; white-space: nowrap; }
.st-user { width: 77px; margin-right: 29px; }
.st-g { width: 28px; margin-right: 32px; }
.st-h { width: 34px; margin-right: 42px; }

/* Title bar */
.titlebar {
  height: 64px;
  flex: none;
  display: flex;
  align-items: center;
  background: #535353;
  border-bottom: 3px solid #3e3e3e;
  color: #cfcfcf;
}

.title-left { width: 1685px; flex: none; display: flex; align-items: center; }
.light { width: 22px; height: 22px; border-radius: 50%; }
.light-red { margin-left: 17px; background: radial-gradient(circle, #7a1f1a 0 4px, #f0655b 5px); }
.light-yellow { margin-left: 16px; background: #f5bf4f; }
.light-green { margin-left: 16px; background: #61c454; }
.home { width: 34px; height: 30px; margin-left: 22px; color: #c6c6c6; }
.layout { width: 33px; height: 22px; margin-left: 38px; color: #c6c6c6; margin-top: -10px; }
.title-name { font-size: 25px; color: #cfcfcf; white-space: nowrap; }
.title-ws { margin-left: auto; font-size: 26px; color: #e2e2e2; white-space: nowrap; }
.chev-s { width: 16px; height: 10px; flex: none; color: #d0d0d0; }
.chev-v { width: 10px; height: 16px; flex: none; color: #d0d0d0; }
.is-dim { opacity: 0.35; }

.searchbox {
  width: 348px;
  height: 38px;
  margin: 0 10px 0 41px;
  display: flex;
  align-items: center;
  gap: 9px;
  padding-left: 5px;
  background: #454545;
  border: 2px solid #4c4c4c;
  border-radius: 4px;
  color: #8f8f8f;
  font-size: 21px;
}

.searchbox svg { width: 30px; height: 30px; color: #bbb; }

/* Control bar */
.controlbar {
  height: 63px;
  flex: none;
  display: flex;
  align-items: center;
  background: #535353;
  border-bottom: 2px solid #484848;
  font-size: 20px;
  color: #d6d6d6;
  white-space: nowrap;
}

.ctl-grip {
  width: 4px;
  height: 36px;
  margin-left: 12px;
  background: repeating-linear-gradient(180deg, #333 0 2px, transparent 2px 5px);
}

.ctl-group { width: 296px; margin-left: 12px; color: #c0c0c0; }
.ctl-label { flex: none; border-bottom: 2px dotted #aaa; line-height: 22px; color: #cfcfcf; }
.ctl-text { flex: none; color: #cfcfcf; }
.ctl-icon { height: 36px; flex: none; color: #c8c8c8; }
.ctl-anchor { width: 35px; height: 36px; flex: none; color: #c8c8c8; }
.globe { width: 30px; }

.dd {
  height: 36px;
  flex: none;
  display: flex;
  align-items: center;
  justify-content: center;
  background: #4b4b4b;
  border-radius: 0 4px 4px 0;
}

.swatch-fill {
  width: 36px;
  height: 36px;
  flex: none;
  display: flex;
  align-items: center;
  justify-content: center;
  background: #4d4d4d;
  border: 2px solid #eee;
  box-shadow: inset 0 0 0 2px #333;
  color: #ccc;
  font-size: 24px;
}

.swatch-stroke {
  position: relative;
  width: 37px;
  height: 36px;
  flex: none;
  background: linear-gradient(to top right, #fff 46%, #d6332c 46% 54%, #fff 54%);
}

.swatch-stroke i {
  position: absolute;
  left: 13px;
  top: 11px;
  width: 12px;
  height: 14px;
  border: 2px solid #222;
}

.stepper {
  height: 37px;
  flex: none;
  display: flex;
  background: #414141;
  border-radius: 4px;
  box-shadow: 0 0 0 2px #4c4c4c;
}

.updown {
  width: 33px;
  flex: none;
  display: flex;
  flex-direction: column;
  align-items: center;
  justify-content: center;
  gap: 6px;
  background: #4b4b4b;
  border-radius: 4px 0 0 4px;
}

.stepper-val { flex: 1; display: flex; align-items: center; }
.stepper-val-pad { padding-left: 6px; }
.stepper-val-txt { padding-left: 8px; font-size: 21px; color: #e2e2e2; }

.ctl-disabled { width: 168px; height: 40px; flex: none; background: #767676; }

.ctl-profile {
  width: 162px;
  height: 36px;
  flex: none;
  display: flex;
  align-items: center;
  gap: 8px;
  padding-left: 10px;
  background: #ececec;
  color: #222;
  font-size: 19px;
}

.ctl-profile i { width: 76px; height: 4px; background: #000; }
.swatch-style { width: 36px; height: 36px; flex: none; background: #e6e6e6; }

/* Workspace */
.workspace { flex: 1; min-height: 0; display: flex; }

.strip { height: 23px; background: #444; position: relative; }

.strip-chev {
  position: absolute;
  left: 12px;
  top: -3px;
  font-size: 22px;
  color: #aaa;
}

.strip-right { left: 46px; }
.strip-end { left: auto; right: 12px; }

.grip {
  width: 36px;
  height: 10px;
  margin: 4px auto 3px;
  background: repeating-linear-gradient(90deg, #333 0 2px, transparent 2px 4px);
}

/* Left tools */
.tools { width: 135px; flex: none; background: #535353; }
.tools-line { width: 3px; flex: none; background: #3e3e3e; }

.tool-grid {
  display: grid;
  grid-template-columns: 57px 57px;
  grid-auto-rows: 45.4px;
  margin: 22px 0 0 11px;
}

.tool {
  position: relative;
  display: flex;
  align-items: center;
  justify-content: center;
  color: #c8c8c8;
}

.tool svg { width: 34px; height: 30px; }

.tool.is-on {
  background: #333;
  border-radius: 5px;
  margin: 1px 2px;
}

.tool.has-more::after {
  content: '';
  position: absolute;
  right: 5px;
  bottom: 2px;
  border-style: solid;
  border-width: 0 0 7px 7px;
  border-color: transparent transparent #ccc transparent;
}

.colorbox { position: relative; height: 101px; margin-top: 12px; }

.colorbox-stroke {
  position: absolute;
  left: 46px;
  top: 35px;
  width: 66px;
  height: 65px;
  background: #fff;
  border: 1px solid #333;
}

.colorbox-stroke::after {
  content: '';
  position: absolute;
  inset: 0;
  background: linear-gradient(to top right, transparent 48.5%, #d6332c 48.5% 52.5%, transparent 52.5%);
}

.colorbox-stroke i {
  position: absolute;
  left: 18px;
  top: 18px;
  width: 28px;
  height: 28px;
  background: #4c4c4c;
  border: 1px solid #333;
}

.colorbox-fill {
  position: absolute;
  left: 12px;
  top: 0;
  width: 66px;
  height: 67px;
  display: flex;
  align-items: center;
  justify-content: center;
  background: #4d4d4d;
  border: 2px solid #333;
  font-size: 26px;
  color: #ccc;
}

.colorbox-default { position: absolute; left: 12px; top: 40px; width: 22px; height: 20px; }
.colorbox-swap { position: absolute; left: 94px; top: 0; width: 22px; height: 24px; }

.mode-row {
  display: flex;
  gap: 2px;
  width: 108px;
  margin-left: 12px;
  background: #4b4b4b;
  border-radius: 4px;
}

.mode-color { height: 36px; margin-top: 13px; }
.mode-draw { height: 33px; margin-top: 11px; }

.mode-btn {
  flex: 1;
  display: flex;
  align-items: center;
  justify-content: center;
  border-radius: 4px;
}

.mode-btn.is-on { background: #333; }
.mode-btn svg { width: 24px; height: 18px; }
.mode-btn i { width: 24px; height: 24px; border: 2px solid #000; }
.mode-blue { background: #7db7ea; }
.mode-grad { background: linear-gradient(90deg, #fff, #111); }
.mode-none { background: linear-gradient(to top right, #fff 42%, #d6332c 42% 58%, #fff 58%); }
.screenmode { width: 42px; height: 28px; margin: 18px 0 0 47px; display: block; }
.tools-more { width: 26px; height: 8px; margin: 42px 0 0 55px; display: block; color: #bbb; }

/* Document */
.doc { width: 3122px; flex: none; display: flex; flex-direction: column; }
.tabrow { height: 55px; flex: none; background: #444; }

.tab {
  width: 702px;
  height: 53px;
  display: flex;
  align-items: center;
  gap: 15px;
  padding-left: 16px;
  background: #535353;
  font-size: 21px;
  color: #e6e6e6;
  white-space: nowrap;
}

.tab-x { font-size: 26px; line-height: 1; }

.rulerrow { height: 30px; flex: none; display: flex; background: #323232; }
.ruler-corner { width: 32px; flex: none; background: #323232; }

.hruler {
  flex: 1;
  display: flex;
  overflow: hidden;
  background: repeating-linear-gradient(90deg, #8a8a8a 0 1px, transparent 1px 19.14px) -3.4px 100%/calc(100% + 4px) 6px no-repeat;
}

.hruler span {
  width: 95.7px;
  flex: none;
  padding-left: 4px;
  border-left: 1px solid #6c6c6c;
  font-size: 20px;
  line-height: 30px;
  color: #cfcfcf;
}

.hruler span:first-child { margin-left: -3.4px; }

.canvasrow { flex: 1; min-height: 0; display: flex; }

.vruler {
  width: 32px;
  flex: none;
  overflow: hidden;
  background:
    repeating-linear-gradient(180deg, transparent 0 1.6px, #8a8a8a 1.6px 2.6px, transparent 2.6px 19.2px) right top/7px 100% no-repeat,
    #323232;
}

.vtick {
  height: 96px;
  display: flex;
  flex-direction: column;
  justify-content: flex-end;
  padding: 0 0 7px 7px;
  border-bottom: 2px solid #6c6c6c;
}

.vtick-first { height: 40px; overflow: hidden; }

.vtick b {
  width: min-content;
  font-weight: 400;
  font-size: 19px;
  line-height: 16px;
  word-break: break-all;
  color: #cfcfcf;
}

/* Grid lines: offsets line up with the artboard origin */
.canvas {
  position: relative;
  flex: 1;
  overflow: hidden;
  background-color: #616161;
  background-image:
    repeating-linear-gradient(90deg, transparent 0 236.5px, #c4c4c4 236.5px 238.5px, transparent 238.5px 239.5px),
    repeating-linear-gradient(180deg, transparent 0 232px, #bcbcbc 232px 234px, transparent 234px 240.4px),
    repeating-linear-gradient(90deg, transparent 0 26.86px, #9c9c9c 26.86px 28.86px, transparent 28.86px 29.94px),
    repeating-linear-gradient(180deg, transparent 0 21.65px, #9c9c9c 21.65px 23.65px, transparent 23.65px 30.05px);
}

.artboard {
  position: absolute;
  left: 954px;
  top: 232px;
  width: 956px;
  height: 961px;
  background-color: #fff;
  background-image:
    repeating-linear-gradient(90deg, #dedede 0 2px, transparent 2px 239.5px),
    repeating-linear-gradient(180deg, transparent 0 238px, #dedede 238px 240px, transparent 240px 240.4px),
    repeating-linear-gradient(90deg, #f3f3f3 0 2px, transparent 2px 29.94px),
    repeating-linear-gradient(180deg, #f3f3f3 0 2px, transparent 2px 30.05px);
  border-left: 2px solid #000;
  border-top: 2px solid #000;
  border-bottom: 3px solid #000;
}

.shape, .circle { position: absolute; }
.rect-big { left: -2px; top: -2px; width: 329px; height: 182px; background: #a52828; }
.rect-mid { left: 68px; top: 388px; width: 181px; height: 181px; background: #b85345; }
.rect-small { left: 117px; top: 689px; width: 90px; height: 267px; background: #d8a595; }

.circle { border: 2px solid #d9656b; border-radius: 50%; }

.circle::after {
  content: '';
  position: absolute;
  left: 50%;
  top: 50%;
  width: 10px;
  height: 10px;
  margin: -5px;
  background: #ef4450;
}

.circle-a { left: 688px; top: -2px; width: 238px; height: 238px; background: #57a3da; }
.circle-b { left: 717px; top: 360px; width: 180px; height: 180px; background: #7fb2e0; }
.circle-c { left: 658px; top: 658px; width: 298px; height: 298px; background: #c3d8ef; }

.bbox {
  position: absolute;
  left: 1614px;
  top: 232px;
  width: 296px;
  height: 958px;
  border: 2px solid #dd5d60;
}

.handle {
  position: absolute;
  width: 11px;
  height: 11px;
  background: #fff;
  border: 2px solid #e07070;
}

.h-tl { left: -7px; top: -7px; }
.h-tc { left: 141px; top: -7px; }
.h-tr { right: -7px; top: -7px; }
.h-ml { left: -7px; top: 473px; }
.h-mr { right: -7px; top: 473px; }
.h-bl { left: -7px; bottom: -7px; }
.h-bc { left: 141px; bottom: -7px; }
.h-br { right: -7px; bottom: -7px; }

.cursor { position: absolute; left: 1774px; top: 1066px; width: 40px; height: 52px; }

/* Status bar */
.statusbar {
  height: 30px;
  flex: none;
  display: flex;
  align-items: center;
  padding-left: 8px;
  background: #535353;
  font-size: 20px;
  color: #d0d0d0;
}

.status-field { height: 30px; flex: none; display: flex; background: #474747; }
.status-val { flex: 1; padding-left: 6px; line-height: 36px; }
.status-field .dd { height: 30px; background: #4f4f4f; }
.status-nav { width: 40px; height: 26px; flex: none; }
.status-tool { width: 225px; flex: none; margin-left: 178px; color: #c4c4c4; line-height: 34px; }
.status-play { width: 12px; height: 20px; flex: none; margin-left: 16px; color: #ccc; }

.hscroll {
  flex: 1;
  height: 30px;
  margin-left: 9px;
  display: flex;
  align-items: center;
  background: #474747;
  color: #999;
  padding-left: 10px;
}

.hscroll-chev { width: 10px; height: 16px; flex: none; color: #8f8f8f; }
.hscroll-chev:first-child { transform: scaleX(-1); }
.hscroll-thumb { width: 45px; height: 30px; flex: none; margin: 0 1129px 0 1095px; background: #5c5c5c; border-radius: 14px; }

/* Vertical scrollbar next to the canvas */
.vscroll {
  width: 30px;
  flex: none;
  display: flex;
  flex-direction: column;
  align-items: center;
  background: #4b4b4b;
}

.vscroll-top { width: 100%; height: 55px; flex: none; background: #444; }
.vscroll-up { margin-top: 12px; color: #999; }
.vscroll-down { margin-top: auto; margin-bottom: 11px; color: #999; }
.vscroll-end { width: 100%; height: 30px; flex: none; background: #515151; }

/* Icon dock */
.dock {
  width: 82px;
  flex: none;
  background: #535353;
  border-left: 5px solid #3e3e3e;
  border-right: 7px solid #434343;
}

.dock-group {
  padding-bottom: 4px;
  border-bottom: 3px solid #404040;
}

.dock-cell {
  height: 53px;
  display: flex;
  align-items: center;
  justify-content: center;
  color: #cfcfcf;
}

.dock-cell svg { width: 34px; height: 34px; }
.dock-cell.is-on { margin: 0 9px; background: #333; border-radius: 5px; color: #eee; }

/* Properties panel */
.props { flex: 1; min-width: 0; background: #535353; font-size: 20.5px; }

.props-tabs { height: 50px; display: flex; background: #444; }

.props-tab {
  display: flex;
  align-items: center;
  padding: 0 16px;
  font-weight: 700;
  font-size: 20.5px;
  color: #a8a8a8;
  border-right: 2px solid #3e3e3e;
  white-space: nowrap;
}

.props-tab.is-on { width: 148px; background: #535353; color: #eee; border-right: 0; }
.props-tab:last-child { width: 138px; padding-left: 22px; }

.prop-sec { padding: 0 25px 0 17px; border-bottom: 2px solid #5a5a5a; }
.sec-title { display: block; margin: 0; font-size: 20.5px; font-weight: 400; line-height: 24px; color: #c2c2c2; }
.sec-group { height: 62px; padding-top: 21px; }
.sec-transform { height: 245px; padding-top: 21px; }
.sec-appearance { height: 315px; padding-top: 21px; }
.sec-pathfinder { height: 153px; padding-top: 22px; }
.sec-actions { border: 0; padding-top: 30px; }

.tf-grid {
  display: grid;
  grid-template-columns: 41px 47px 103px 73px 104px 58px;
  grid-auto-rows: 38px;
  row-gap: 11px;
  margin-top: 16px;
  align-items: center;
}

.tf-anchor { width: 35px; height: 37px; grid-row: 1 / span 2; color: #c8c8c8; }
.tf-link { width: 28px; height: 28px; grid-column: 6; grid-row: 1 / span 2; margin-left: 20px; color: #c8c8c8; }
.tf-label { text-align: right; padding-right: 8px; color: #c2c2c2; }

.tf-input {
  height: 37px;
  display: flex;
  align-items: center;
  justify-content: center;
  background: #414141;
  border-radius: 3px;
  box-shadow: 0 0 0 2px #4c4c4c;
  color: #e6e6e6;
}

.tf-angle { grid-column: 2; width: 28px; height: 22px; margin-left: 13px; color: #bbb; }

.tf-select {
  grid-column: 3;
  height: 37px;
  display: flex;
  align-items: center;
  justify-content: space-between;
  padding-left: 6px;
  background: #414141;
  border-radius: 3px;
  box-shadow: 0 0 0 2px #4c4c4c;
  color: #e6e6e6;
}

.tf-select .dd { height: 37px; }

.tf-flips {
  grid-column: 4 / span 2;
  display: flex;
  align-items: center;
  gap: 32px;
  padding-left: 68px;
  color: #c8c8c8;
}

.tf-flips svg { width: 24px; height: 26px; flex: none; }

.more-row { display: flex; justify-content: flex-end; margin-top: 16px; }
.more-row-ap { margin-top: 11px; }
.more-row-pf { margin-top: 17px; }
.more { width: 26px; height: 8px; color: #c8c8c8; }

.ap-row { height: 54px; display: flex; align-items: center; }
.ap-row:first-of-type { margin-top: 11px; }
.ap-fill, .ap-stroke, .ap-opacity { width: 33px; height: 33px; flex: none; margin-right: 24px; }

.ap-fill {
  display: flex;
  align-items: center;
  justify-content: center;
  background: #4d4d4d;
  border: 2px solid #333;
  color: #ccc;
  font-size: 23px;
}

.ap-stroke { position: relative; background: #fff; border: 1px solid #333; }
.ap-stroke i { position: absolute; left: 9px; top: 9px; width: 13px; height: 13px; background: #4c4c4c; border: 1px solid #222; }

.ap-stroke::after {
  content: '';
  position: absolute;
  inset: 0;
  background: linear-gradient(to top right, transparent 45%, #d6332c 45% 55%, transparent 55%);
}

.ap-opacity {
  background: repeating-conic-gradient(#5e5e5e 0 25%, #777 0 50%) 0 0/16px 16px;
  border: 2px solid #bbb;
}

.ap-label { width: 103px; flex: none; color: #c4c4c4; white-space: nowrap; }
.ap-label.is-link { text-decoration: underline dotted; text-underline-offset: 3px; }

.ap-ctl {
  width: 129px;
  height: 37px;
  display: flex;
  background: #414141;
  border-radius: 4px;
  box-shadow: 0 0 0 2px #4c4c4c;
}

.ap-ctl .dd { height: 37px; }
.ap-val { padding-left: 8px; color: #e2e2e2; }
.ap-fx { margin-left: 13px; font-family: 'Liberation Serif', serif; font-style: italic; font-size: 27px; color: #bbb; }

.pf-row {
  display: flex;
  align-items: center;
  height: 38px;
  margin-top: 22px;
  padding-left: 11px;
  gap: 31px;
  color: #cfcfcf;
}

.pf-row svg { width: 27px; height: 28px; flex: none; }

.pf-expand {
  width: 117px;
  height: 38px;
  margin-left: auto;
  margin-right: -5px;
  display: flex;
  align-items: center;
  justify-content: center;
  background: #585858;
  border-radius: 3px;
  color: #7d7d7d;
}

.act-btn {
  display: block;
  width: 393px;
  height: 38px;
  margin-bottom: 20px;
  padding: 0;
  background: transparent;
  border: 2px solid #6a6a6a;
  border-radius: 5px;
  font: inherit;
  font-size: 21px;
  color: #e0e0e0;
}

.sec-actions .sec-title { margin-bottom: 18px; }
.act-split { display: flex; gap: 3px; }
.act-split .act-btn { width: 351px; margin: 0; }

.act-dd {
  width: 39px;
  height: 38px;
  display: flex;
  align-items: center;
  justify-content: center;
  background: #474747;
  border: 2px solid #6a6a6a;
  border-radius: 5px;
}

/* Layers panel */
.layers {
  position: absolute;
  left: 2673px;
  top: 812px;
  width: 617px;
  height: 688px;
  display: flex;
  flex-direction: column;
  background: #535353;
  border-top: 5px solid #3a3a3a;
  box-shadow: 0 0 0 1px #444;
}

.layers-tabs {
  height: 52px;
  flex: none;
  display: flex;
  align-items: center;
  background: #444;
  border-bottom: 2px solid #3c3c3c;
  font-size: 21.5px;
  font-weight: 700;
  color: #a8a8a8;
}

.ly-tab {
  height: 100%;
  display: flex;
  align-items: center;
  padding-left: 17px;
  border-right: 2px solid #3c3c3c;
  white-space: nowrap;
  overflow: hidden;
}

.ly-tab.is-on { width: 92px; background: #535353; color: #eee; border: 0; height: calc(100% + 2px); }
.ly-tab-export { width: 222px; }
.ly-tab-boards { width: 183px; padding-left: 16px; }
.ly-more { margin-left: 48px; font-size: 24px; font-weight: 400; color: #ccc; }
.ly-bar { width: 2px; height: 24px; margin-left: 16px; background: #bbb; }
.ly-menu { width: 20px; height: 14px; margin-left: 14px; color: #ccc; }

.ly-list {
  height: 570px;
  margin: 12px 10px 0 12px;
  flex: none;
  border-bottom: 2px solid #5c5c5c;
  border-left: 2px solid #5c5c5c;
  border-right: 2px solid #5c5c5c;
}

.ly-row {
  position: relative;
  height: 39px;
  margin-bottom: 1px;
  display: flex;
  align-items: center;
  background: #4c4c4c;
  border-bottom: 1px solid #5c5c5c;
  font-size: 19px;
}

.ly-row.is-sel { background: #53657f; }
.ly-eye { width: 37px; height: 100%; flex: none; display: flex; align-items: center; justify-content: center; border-right: 1px solid #5a5a5a; color: #c8c8c8; }
.ly-eye svg { width: 24px; height: 16px; }
.ly-lock { width: 43px; flex: none; }
.ly-color { width: 6px; height: 100%; flex: none; background: #e8534f; }
.ly-arrow { width: 10px; height: 16px; flex: none; margin: 0 25px 0 14px; color: #ddd; }
.ly-thumb { width: 34px; height: 34px; flex: none; }
.ly-name { margin-left: 9px; color: #dcdcdc; flex: 1; }
.ly-target { width: 40px; height: 100%; margin-right: 27px; flex: none; display: flex; align-items: center; justify-content: center; border-left: 1px solid #5a5a5a; }
.ly-target i { width: 15px; height: 15px; border: 2px solid #cfcfcf; border-radius: 50%; }
.ly-selected { position: absolute; left: 567px; top: 13px; width: 15px; height: 15px; background: #ef5350; border: 2px solid #200; }
.ly-corner { position: absolute; right: 0; top: 0; border-style: solid; border-width: 0 11px 11px 0; border-color: transparent #ddd transparent transparent; }

.ly-foot { height: 37px; flex: none; display: flex; align-items: center; padding: 0 49px 0 12px; color: #d0d0d0; font-size: 19px; border-bottom: 3px solid #3a3a3a; }
.ly-count { width: 288px; flex: none; }
.ly-ic { width: 25px; height: 26px; flex: none; margin-left: 24px; }
.ly-ic-first { margin-left: 0; }
.ly-resize { flex: 1; background: #505050; }
.ly-resize .grip { margin: 1px auto 0; }

/* Watermark */
.logo {
  position: absolute;
  left: 3550px;
  top: 1880px;
  width: 204px;
  height: 204px;
  display: flex;
  align-items: center;
  justify-content: center;
  background: #fff;
  border-radius: 50%;
  box-shadow: inset 0 0 14px rgba(0, 0, 0, 0.12);
}

.logo svg { width: 98px; height: 67px; }
```
